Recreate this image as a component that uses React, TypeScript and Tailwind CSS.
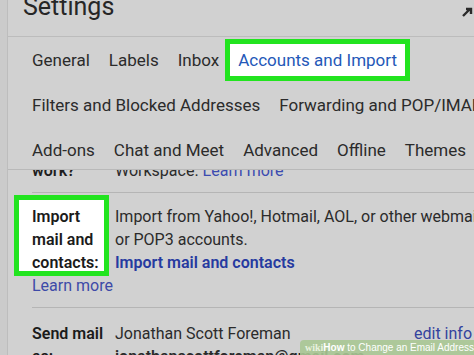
import React from "react";

const FONT = { fontFamily: "Roboto, 'Noto Sans', Arial, sans-serif" };

function Tab({ label, active }: { label: string; active?: boolean }) {
  if (active) {
    return (
      <span className="-my-[6px] -mx-[13px] border-[5px] border-[#22e41f] bg-white px-[8px] py-[6px] text-[#2458b8]">
        {label}
      </span>
    );
  }
  return <span>{label}</span>;
}

export default function App() {
  return (
    <div
      className="relative flex h-[355px] w-[474px] overflow-hidden bg-[#d1d1d1] text-[#2b2b2b]"
      style={FONT}
    >
      <div className="w-[8px] shrink-0 border-r border-[#bdbdbd] bg-[#cbcbcb]" />

      <div className="flex min-w-0 flex-1 flex-col">
        {/* header */}
        <div className="relative flex h-[37px] shrink-0 items-start overflow-hidden border-b border-[#bcbcbc] pl-[15px]">
          <span className="-mt-[6px] block text-[25px] leading-[26px] text-[#262626]">
            Settings
          </span>
          <svg
            className="absolute right-[1px] top-[6px]"
            width="12"
            height="12"
            viewBox="0 0 12 12"
          >
            <path d="M2 10 L9 3 M5 3 H10 V8" stroke="#2a2a2a" strokeWidth="2.4" fill="none" />
          </svg>
        </div>

        {/* tabs */}
        <div className="relative z-10 flex h-[133px] shrink-0 flex-col border-b border-[#b9b9b9] bg-[#d1d1d1] pl-[24px] text-[17px] leading-[20px]">
          <div className="flex h-[45px] shrink-0 items-center gap-[19px] whitespace-nowrap pt-[1px]">
            <Tab label="General" />
            <Tab label="Labels" />
            <Tab label="Inbox" />
            <Tab label="Accounts and Import" active />
          </div>
          <div className="flex h-[45px] shrink-0 items-center gap-[19px] whitespace-nowrap">
            <Tab label="Filters and Blocked Addresses" />
            <Tab label="Forwarding and POP/IMAP" />
          </div>
          <div className="flex h-[43px] shrink-0 items-center gap-[19px] whitespace-nowrap pt-[2px]">
            <Tab label="Add-ons" />
            <Tab label="Chat and Meet" />
            <Tab label="Advanced" />
            <Tab label="Offline" />
            <Tab label="Themes" />
          </div>
        </div>

        {/* content */}
        <div className="relative flex min-h-0 flex-1 flex-col overflow-hidden pl-[24px] text-[16px] leading-[23px]">
          <div className="-mt-[11px] flex h-[34px] shrink-0 gap-[6px] whitespace-nowrap border-b border-[#b5b5b5]">
            <span className="w-[77px] shrink-0 font-semibold text-[#1e1e1e]">work?</span>
            <span>
              Workspace. <span className="text-[#3b4bb0]">Learn more</span>
            </span>
          </div>

          <div className="relative flex h-[115px] shrink-0 flex-col border-b border-[#b5b5b5] pt-[12px]">
            <div
              className="absolute left-[-18px] top-[2px] h-[81px] w-[95px] border-[5px] border-[#22e41f] bg-white"
              aria-hidden
            />
            <div className="relative flex gap-[6px] whitespace-nowrap">
              <div className="w-[77px] shrink-0 font-semibold text-[#1b1b1b]">
                Import
                <br />
                mail and
                <br />
                contacts:
              </div>
              <div>
                Import from Yahoo!, Hotmail, AOL, or other webmail
                <br />
                or POP3 accounts.
                <br />
                <span className="font-semibold text-[#263aa0]">
                  Import mail and contacts
                </span>
              </div>
            </div>
            <div className="relative text-[#3d4aa8]">Learn more</div>
          </div>

          <div className="flex gap-[6px] whitespace-nowrap pt-[14px]">
            <div className="w-[77px] shrink-0 font-semibold text-[#1b1b1b]">
              Send mail
              <br />
              as:
            </div>
            <div className="flex-1">
              <div className="flex justify-between pr-[2px]">
                <span>Jonathan Scott Foreman</span>
                <span className="text-[#33429e]">edit info</span>
              </div>
              <div className="font-semibold">jonathanscottforeman@gmail.com</div>
            </div>
          </div>

          <div
            className="absolute bottom-0 right-0 flex h-[15px] w-[174px] items-center whitespace-nowrap rounded-tl-[4px] bg-[#a9c794]/90 pl-[5px] text-[10px] leading-[15px] text-white"
            style={{ fontFamily: "'Liberation Sans', Arial, sans-serif" }}
          >
            <span className="font-bold text-[#e8f2df]" style={{ fontFamily: "'Liberation Serif', serif" }}>
              wiki
            </span>
            <span className="font-bold">How</span>
            <span>&nbsp;to Change an Email Address</span>
          </div>
        </div>
      </div>
    </div>
  );
}
